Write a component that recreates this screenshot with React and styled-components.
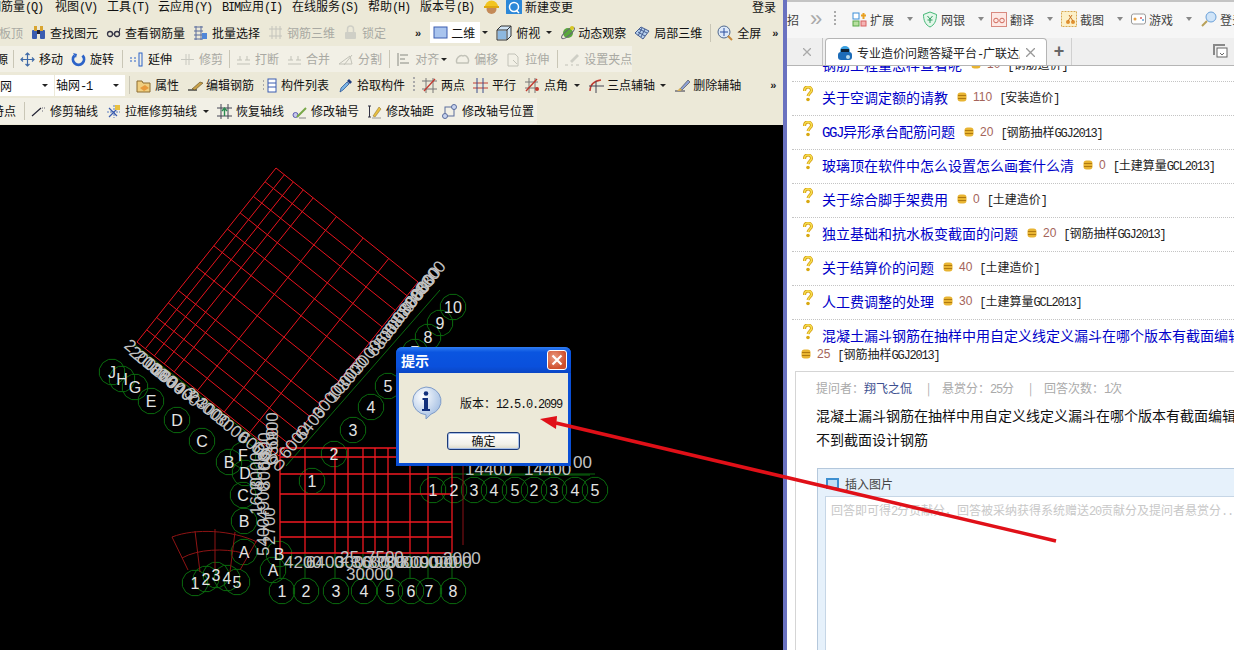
import React from 'react';
import styled, { createGlobalStyle } from 'styled-components';

const Global = createGlobalStyle`
  html, body { margin: 0; padding: 0; background: #000; }
  body { font-family: "Noto Sans CJK SC", "Liberation Sans", sans-serif; font-size: 12px; }
`;

const Page = styled.div`
  position: relative;
  display: flex;
  width: 1234px;
  height: 650px;
  overflow: hidden;
`;

// half-width latin, the way the old bitmap font in the shot draws it
const Latin = styled.span`
  font-family: "Liberation Mono", monospace;
  letter-spacing: -.1em;
`;

const Mixed = ({ children }) => children.split(/([\x00-\x7f]+)/).map((part, i) => (
  i % 2 ? <Latin key={i}>{part}</Latin> : part
));

// ---- left: CAD application ----
const Cad = styled.div`
  display: flex;
  flex-direction: column;
  width: 783px;
  flex: none;
`;

const Bars = styled.div`
  display: flex;
  flex-direction: column;
  height: 125px;
  flex: none;
  background: #ece9d8;
  color: #111;
`;

const MenuRow = styled.div`
  display: flex;
  align-items: center;
  height: 14px;
  white-space: nowrap;
  overflow: hidden;
`;

const MenuItem = styled.span`
  flex: none;
  width: ${p => p.$w}px;
  margin-left: ${p => p.$ml || 0}px;
  line-height: 14px;
  font-size: 12px;
`;

const Row = styled.div`
  display: flex;
  align-items: center;
  height: ${p => p.$h || 26}px;
  margin-top: ${p => p.$mt || 0}px;
  white-space: nowrap;
  overflow: hidden;
`;

const Strip = styled.div`
  display: flex;
  align-items: center;
  gap: 8px;
  flex: none;
  height: 100%;
  width: ${p => p.$w}px;
  box-sizing: border-box;
  background: ${p => p.$plain ? 'transparent' : '#f2f0e6'};
  overflow: hidden;
`;

const Tool = styled.span`
  display: inline-flex;
  align-items: center;
  gap: ${p => p.$gap ?? 4}px;
  flex: none;
  margin-left: ${p => p.$ml || 0}px;
  line-height: 16px;
  color: ${p => p.$off ? '#a9a9a3' : '#111'};
`;

const Caret = styled.i`
  flex: none;
  width: 0;
  height: 0;
  margin-left: ${p => p.$ml || 0}px;
  border: 3px solid transparent;
  border-top: 3px solid #222;
  border-bottom: 0;
`;

const Sep = styled.i`
  flex: none;
  width: 1px;
  height: 18px;
  margin-left: ${p => p.$ml || 0}px;
  margin-right: -2px;
  background: #c9c6b6;
`;

const Chevrons = styled.b`
  flex: none;
  margin-left: ${p => p.$ml || 0}px;
  font: bold 11px "Liberation Sans", sans-serif;
  letter-spacing: -1px;
  color: #222;
`;

const Combo = styled.span`
  display: flex;
  align-items: center;
  justify-content: ${p => p.$start ? 'flex-start' : 'space-between'};
  gap: ${p => p.$start ? 3 : 0}px;
  flex: none;
  width: ${p => p.$w}px;
  height: 21px;
  margin-left: ${p => p.$ml || 0}px;
  box-sizing: border-box;
  padding: 0 6px 0 ${p => p.$pl || 0}px;
  background: #fff;
  font-size: 12px;
`;

const Grip = styled.i`
  flex: none;
  width: 2px;
  height: 16px;
  margin-right: ${p => p.$mr ?? -2}px;
  background: repeating-linear-gradient(#aaa 0 2px, transparent 2px 4px);
`;

const Canvas = styled.div`
  position: relative;
  flex: 1;
  background: #000;
  overflow: hidden;
  svg { display: block; }
`;

// ---- message box on the canvas ----
const Dialog = styled.div`
  position: absolute;
  left: 396px;
  top: 222px;
  width: 175px;
  height: 119px;
  box-sizing: border-box;
  display: flex;
  flex-direction: column;
  padding: 0 3px 3px;
  background: #0a4fd6;
  border-radius: 6px 6px 0 0;
`;

const DialogTitle = styled.div`
  display: flex;
  align-items: center;
  justify-content: space-between;
  height: 26px;
  flex: none;
  margin: 0 -3px;
  padding: 0 4px 0 5px;
  border-radius: 6px 6px 0 0;
  background: linear-gradient(#2f7df2, #0a55e0 20%, #0a50dc 75%, #0a46c4);
  color: #fff;
  font-size: 14px;
  font-weight: 700;
`;

const CloseBtn = styled.span`
  display: flex;
  align-items: center;
  justify-content: center;
  width: 20px;
  height: 20px;
  box-sizing: border-box;
  border: 1px solid #fff;
  border-radius: 3px;
  background: radial-gradient(circle at 35% 35%, #ea9a80, #cf4f2c 70%);
`;

const DialogBody = styled.div`
  flex: 1;
  display: flex;
  flex-direction: column;
  background: #ece9d8;
`;

const DialogMsg = styled.div`
  display: flex;
  align-items: center;
  gap: 18px;
  padding: 13px 0 0 11px;
  font-size: 12px;
  color: #111;
  white-space: nowrap;
`;

const OkBtn = styled.span`
  align-self: flex-start;
  margin: 12px 0 0 48px;
  width: 73px;
  height: 18px;
  box-sizing: border-box;
  border: 1px solid #1c3a78;
  border-radius: 3px;
  box-shadow: inset 0 0 0 1px #a9c0e8;
  background: linear-gradient(#fff, #f2f1ea 70%, #dcd9c8);
  text-align: center;
  line-height: 15px;
  font-size: 12px;
  color: #111;
`;

// ---- right: browser ----
const Divider = styled.div`
  flex: none;
  width: 4px;
  background: #6a72c0;
`;

const Browser = styled.div`
  flex: 1;
  min-width: 0;
  display: flex;
  flex-direction: column;
  background: #fff;
`;

const BrowserBar = styled.div`
  display: flex;
  align-items: center;
  height: 38px;
  flex: none;
  box-sizing: border-box;
  border-top: 2px solid #c4c4c4;
  padding-bottom: 2px;
  background: #f6f6f6;
  color: #333;
  font-size: 12px;
  white-space: nowrap;
  overflow: hidden;
`;

const BarText = styled.span`
  flex: none;
  margin-right: 11px;
  color: #444;
`;

const BarChevron = styled.span`
  flex: none;
  width: 12px;
  margin-right: 12px;
  color: #aaa;
  font: 22px/20px "Liberation Sans", sans-serif;
`;

const BarBtn = styled.span`
  display: inline-flex;
  align-items: center;
  flex: none;
  gap: 3px;
  width: ${p => p.$w || 70}px;
  color: #444;
`;

const BarCaret = styled.i`
  width: 0;
  height: 0;
  margin-left: 10px;
  border: 3px solid transparent;
  border-top: 4px solid #888;
  border-bottom: 0;
`;

const TabRow = styled.div`
  display: flex;
  align-items: flex-end;
  height: 28px;
  flex: none;
  box-sizing: border-box;
  background: #efefef;
  border-bottom: 1px solid #b5b5b5;
  overflow: hidden;
`;

const OldTab = styled.div`
  width: 36px;
  height: 27px;
  flex: none;
  display: flex;
  align-items: center;
  justify-content: flex-end;
  padding-right: 11px;
  box-sizing: border-box;
  border-right: 1px solid #c4c4c4;
  color: #999;
`;

const ActiveTab = styled.div`
  display: flex;
  align-items: center;
  width: 222px;
  height: 28px;
  flex: none;
  margin: 0 0 -1px 2px;
  padding-left: 11px;
  box-sizing: border-box;
  background: #fff;
  border: 1px solid #b5b5b5;
  border-bottom: 0;
  border-radius: 4px 4px 0 0;
  color: #222;
  font-size: 12px;
`;

const TabTitle = styled.span`
  width: 163px;
  margin: 0 6px 0 4px;
  overflow: hidden;
  white-space: nowrap;
  flex: none;
`;

const Plus = styled.span`
  width: 24px;
  height: 27px;
  flex: none;
  text-align: center;
  font: bold 18px/26px "Liberation Sans", sans-serif;
  color: #666;
  border-right: 1px solid #d0d0d0;
`;

const Restore = styled.span`
  margin: 0 6px 6px auto;
  display: flex;
`;

const Content = styled.div`
  position: relative;
  flex: 1;
  overflow: hidden;
  background: #fff;
`;

const Clipped = styled.div`
  height: 14px;
  margin: -9px 0 10px;
  padding-left: 35px;
  display: flex;
  align-items: center;
  color: #0000c8;
  font-size: 14px;
  white-space: nowrap;
`;

const List = styled.ul`
  list-style: none;
  margin: 0;
  padding: 0 0 0 5px;
`;

const Item = styled.li`
  display: flex;
  flex-wrap: wrap;
  align-items: center;
  height: ${p => p.$tall ? '52px' : '34px'};
  align-content: flex-start;
  padding-top: 5px;
  box-sizing: border-box;
  border-top: 1px dotted #c4c4c4;
  white-space: nowrap;
  width: 500px;
`;

const Ask = styled.span`
  width: 30px;
  flex: none;
  padding-left: 11px;
  box-sizing: border-box;
  height: 20px;
  margin-top: -3px;
`;

const Question = styled.a`
  flex: none;
  color: #0000c8;
  font-size: 14px;
  line-height: 20px;
`;

const Points = styled.span`
  display: inline-flex;
  align-items: center;
  gap: 6px;
  flex: none;
  margin-left: 9px;
  color: #a4645a;
  font: 12px "Liberation Sans", sans-serif;
`;

const Category = styled.span`
  flex: none;
  margin-left: 7px;
  font-size: 12px;
  color: #222;
`;

const Line2 = styled.div`
  width: 100%;
  display: flex;
  align-items: center;
  height: 15px;
  margin-top: 1px;
`;

const Detail = styled.section`
  margin-left: 8px;
  width: 500px;
  height: 300px;
  border: 1px solid #d5d5d5;
  border-right: 0;
  padding: 8px 0 0 20px;
  white-space: nowrap;
`;

const Meta = styled.div`
  display: flex;
  gap: 15px;
  font-size: 12px;
  line-height: 16px;
  color: #aaa;
  b { font-weight: 400; color: #3d4f8f; }
`;

const Pipe = styled.span`
  width: 0;
`;

const Body = styled.p`
  margin: 5px 0 0;
  font-size: 14px;
  line-height: 24px;
  color: #111;
`;

const AnswerBox = styled.div`
  margin: 17px 0 0 1px;
  height: 200px;
  box-sizing: border-box;
  border: 1px solid #b5c8dc;
  border-right: 0;
  background: #e6f1fb;
  padding: 0 0 0 7px;
`;

const AnswerHead = styled.div`
  display: flex;
  align-items: center;
  gap: 6px;
  height: 27px;
  padding: 2px 0 0 1px;
  box-sizing: border-box;
  font-size: 12px;
  color: #444;
`;

const AnswerInput = styled.div`
  height: 170px;
  background: #fff;
  border: 1px solid #c6d6e6;
  border-right: 0;
  padding: 4px 0 0 5px;
  font-size: 12px;
  color: #c8c8c8;
  overflow: hidden;
`;

const Overlay = styled.svg`
  position: absolute;
  left: 0;
  top: 0;
  pointer-events: none;
`;

// ---- small toolbar drawings ----
const Ico = ({ children, w = 15, h = 15 }) => (
  <svg width={w} height={h} viewBox={`0 0 ${w} ${h}`} style={{ flex: 'none', display: 'block' }}>{children}</svg>
);

const Binoculars = () => <Ico><rect x="1" y="5" width="5" height="9" rx="1" fill="#3a5cb0"/><rect x="9" y="5" width="5" height="9" rx="1" fill="#3a5cb0"/><rect x="3" y="1" width="3" height="5" fill="#d9a531"/><rect x="9" y="1" width="3" height="5" fill="#d9a531"/><rect x="6" y="5" width="3" height="4" fill="#223"/></Ico>;
const Glasses = () => <Ico><circle cx="4" cy="9" r="2.5" fill="none" stroke="#334" strokeWidth="1.3"/><circle cx="11" cy="9" r="2.5" fill="none" stroke="#334" strokeWidth="1.3"/><path d="M6 9h2.5M13 8l1-5" stroke="#334"/></Ico>;
const Batch = () => <Ico><path d="M1 2h9M1 6h9M1 10h9M1 14h9M3 1v14M8 1v14" stroke="#5a6c9c" fill="none"/><rect x="9" y="8" width="5" height="6" fill="#4f86d8"/></Ico>;
const Rebar3d = () => <Ico><path d="M1 4h13M1 11h13M4 1v13M8 1v13M12 1v13" stroke="#c4c4bc" fill="none"/></Ico>;
const Lock = () => <Ico><rect x="2" y="7" width="11" height="7" rx="1" fill="#cfcfc6"/><path d="M4.5 7V4a3 3 0 0 1 6 0v3" stroke="#cfcfc6" strokeWidth="1.5" fill="none"/></Ico>;
const Plane = () => <Ico><rect x="1" y="2" width="13" height="11" fill="#a9c4ee" stroke="#3a5cb0"/></Ico>;
const Cube = () => <Ico w={16} h={16}><path d="M1 5l4-4h10v10l-4 4H1z" fill="#cfe3f4" stroke="#333"/><path d="M1 5h10v10M11 5l4-4" fill="none" stroke="#333"/><rect x="2" y="6" width="8" height="8" fill="#8db8e0"/></Ico>;
const Orbit = () => <Ico w={16} h={16}><circle cx="8" cy="8" r="5" fill="#5aa83c"/><ellipse cx="8" cy="8" rx="8" ry="2.5" transform="rotate(-40 8 8)" fill="none" stroke="#667" /><circle cx="12" cy="3" r="2" fill="#d8c820"/></Ico>;
const Local3d = () => <Ico w={16} h={16}><path d="M1 8l6-6 8 4-6 8z" fill="#b8d2ee" stroke="#445c90"/><path d="M5 4l8 4M4 7l7 4M8 3l-4 8M11 4l-4 8" stroke="#445c90" fill="none"/></Ico>;
const Zoom = () => <Ico w={16} h={16}><circle cx="7" cy="7" r="6" fill="#dce8f8" stroke="#50688c"/><path d="M7 3v8M3 7h8" stroke="#2a4ea0"/><path d="M11 11l4 4" stroke="#c88a3c" strokeWidth="2"/></Ico>;
const Move = () => <Ico><path d="M7.5 1v13M1 7.5h13M5.5 3l2-2 2 2M5.5 12l2 2 2-2M3 5.5l-2 2 2 2M12 5.5l2 2-2 2" stroke="#3f6aa8" fill="none" strokeWidth="1.2"/></Ico>;
const Rotate = () => <Ico><path d="M3.5 3.5a5.5 5.5 0 1 0 8 0" stroke="#2c63c8" strokeWidth="2.8" fill="none"/><path d="M2 1l4 1-1 4z" fill="#2c63c8"/></Ico>;
const Extend = () => <Ico><path d="M1 6h2M1 9h2M5 6h2M5 9h2" stroke="#2c63c8"/><rect x="10" y="1" width="3" height="13" fill="none" stroke="#2c63c8"/></Ico>;
const Trim = () => <Ico><path d="M1 7.5h13M6 2v11M9 2v11" stroke="#c8c8c0" fill="none"/></Ico>;
const Breaks = () => <Ico><path d="M1 12h13M1 8h5M9 8h5M4 4v4M11 4v4" stroke="#c2c2b8" fill="none"/></Ico>;
const Split = () => <Ico w={16} h={15}><path d="M1 12h13L12 4 1 12M6 13l8-10" stroke="#c2c2b8" fill="none"/></Ico>;
const Align = () => <Ico><path d="M2 1v13M4 3h8M4 7h5M4 11h9" stroke="#bdbdb4" strokeWidth="2" fill="none"/></Ico>;
const Offset = () => <Ico><path d="M2 11c-2-4 3-9 6-7 3-2 7 3 5 7z" fill="none" stroke="#c2c2b8" strokeWidth="1.5"/></Ico>;
const Stretch = () => <Ico><path d="M2 2h7l3 3v9H2z" fill="none" stroke="#c2c2b8"/><path d="M7 8l4 4" stroke="#c2c2b8"/></Ico>;
const Grab = () => <Ico w={16} h={15}><path d="M1 13h3M7 13h2M12 13h3" stroke="#c2c2b8"/><path d="M6 9l7-7 2 2-7 7z" fill="#cfcfc6"/></Ico>;
const Attr = () => <Ico><path d="M1 3h5l1 2h7v9H1z" fill="#f0cf80" stroke="#8c6c30"/><path d="M4 10l5-3 4 3-5 3z" fill="#e89a3c"/></Ico>;
const EditRebar = () => <Ico w={17} h={15}><path d="M1 12h9" stroke="#222" strokeWidth="1.2"/><path d="M5 11l8-7 3 1-8 7z" fill="#c8a048" stroke="#5a4a20" strokeWidth=".6"/></Ico>;
const ListIco = () => <Ico><path d="M1 3h2M1 7h2M1 11h2" stroke="#667" strokeDasharray="1 1"/><rect x="6" y="1" width="8" height="13" fill="#fff" stroke="#3a5cb0"/><path d="M6 5h8M6 9h8" stroke="#3a5cb0"/></Ico>;
const Pick = () => <Ico><path d="M2 14l1-4 6-6 2 2-6 6z" fill="#7ab4e4" stroke="#204a90" strokeWidth=".7"/><path d="M9 3l2-2 3 3-2 2z" fill="#1c3c80"/></Ico>;
const TwoPts = () => <Ico w={16} h={16}><path d="M1 4h15M1 12h15M5 1v15M12 1v15" stroke="#777" fill="none"/><path d="M3 14l11-12" stroke="#c23a30" strokeWidth="1.3"/></Ico>;
const Parallel = () => <Ico><path d="M0 5h15M0 10h15" stroke="#c23a30"/><path d="M4 0v15M10 0v15" stroke="#3a4c8c"/></Ico>;
const Angle = () => <Ico w={16} h={16}><path d="M1 5h13M1 11h13M5 1v15M11 1v15" stroke="#777"/><path d="M2 14L13 2" stroke="#c23a30" strokeWidth="1.4"/><circle cx="13" cy="12" r="2" fill="#c23a30"/></Ico>;
const Arc3 = () => <Ico w={16} h={16}><path d="M2 14c0-6 4-10 11-11" stroke="#c23a30" strokeWidth="1.4" fill="none"/><path d="M1 9h15M8 4v12" stroke="#445"/></Ico>;
const Erase = () => <Ico w={17} h={16}><path d="M1 14h10" stroke="#334"/><path d="M6 12l8-9 2 2-8 8z" fill="#8ca0d4" stroke="#444" strokeWidth=".6"/><path d="M3 14l3-3 2 2-2 1z" fill="#d8b058"/></Ico>;
const CutAxis = () => <Ico><path d="M1 12l9-8" stroke="#223" strokeWidth="1.2"/><path d="M11 4h3M11 7h2" stroke="#667" strokeDasharray="1 1"/></Ico>;
const BoxCut = () => <Ico><path d="M1 8h13M8 1v13" stroke="#5a7cc0" strokeDasharray="2 1"/><path d="M3 13l9-9M3 4l8 8" stroke="#3a5cb0" strokeWidth="1.2"/><rect x="9" y="1" width="5" height="5" fill="#e8c040"/></Ico>;
const Restores = () => <Ico><path d="M0 4h15M0 12h15M4 0v15M11 0v15" stroke="#445"/><path d="M7.5 4v8M5 7l2.5-3 2.5 3" stroke="#2a8a50" strokeWidth="1.4" fill="none"/></Ico>;
const EditNo = () => <Ico><circle cx="3.5" cy="11" r="2.5" fill="#c8c8ec" stroke="#5a5ab0"/><path d="M5 13l9-9" stroke="#78a848" strokeWidth="2"/><path d="M7 14h7" stroke="#888"/></Ico>;
const EditDist = () => <Ico><path d="M1 2h3M2.500 2v11M1 13h3" stroke="#334"/><path d="M6 12l6-9 2 2-6 8z" fill="#e8c040" stroke="#886820" strokeWidth=".5"/><path d="M5 14h9" stroke="#999"/></Ico>;
const EditPos = () => <Ico><rect x="3" y="3" width="9" height="9" fill="none" stroke="#5a6c9c"/><circle cx="3" cy="12" r="2.500" fill="#c8d4f0" stroke="#5a6c9c"/><circle cx="12" cy="3" r="2.500" fill="#c8d4f0" stroke="#5a6c9c"/></Ico>;
const Helmet = () => <svg width="17" height="16" viewBox="0 0 17 16" style={{ display: 'block', flex: 'none' }}><circle cx="8.500" cy="10" r="5" fill="#c48a58"/><path d="M2 8a6.500 6.500 0 0 1 13 0z" fill="#f2c520"/><rect x="1" y="7" width="15" height="2" fill="#e0a810"/></svg>;
const BlueBadge = () => <svg width="16" height="16" viewBox="0 0 16 16" style={{ display: 'block', flex: 'none' }}><rect width="16" height="16" rx="2" fill="#2c88d8"/><circle cx="8" cy="8" r="4.500" fill="none" stroke="#fff" strokeWidth="1.500"/><path d="M10 11l3 3" stroke="#fff" strokeWidth="1.500"/></svg>;

const ExtIco = () => <Ico><rect x="1" y="1" width="6" height="6" fill="#fff" stroke="#3a8ed8"/><rect x="1" y="9" width="6" height="5" fill="#b8e0a0" stroke="#58a848"/><rect x="9" y="9" width="5" height="5" fill="#f4b4b4" stroke="#d86060"/><path d="M11.500 1v6M9 3.500h5" stroke="#e8a020" strokeWidth="2"/></Ico>;
const BankIco = () => <Ico w={16} h={17}><path d="M8 1l6.500 2.500c0 6-2 10.500-6.500 12.500C3.500 14 1.500 9.500 1.500 3.500z" fill="#e4f7ea" stroke="#46b878"/><path d="M5.500 5L8 8l2.500-3M5.500 9h5M8 8v4" stroke="#2f9a5e" fill="none"/></Ico>;
const TransIco = () => <svg width="16" height="15" viewBox="0 0 16 15" style={{ display: 'block', flex: 'none' }}><rect x=".5" y=".5" width="15" height="14" fill="#fde8e4" stroke="#d88a80"/><circle cx="5" cy="8.500" r="2.300" fill="none" stroke="#d0695c"/><circle cx="11" cy="8.500" r="2.300" fill="none" stroke="#d0695c"/></svg>;
const ShotIco = () => <Ico w={16} h={16}><rect x=".5" y=".5" width="15" height="15" fill="#fcf0c8" stroke="#d8a850" strokeDasharray="2 1"/><circle cx="7" cy="11" r="2" fill="#e09030"/><circle cx="12" cy="11" r="2" fill="#e09030"/><path d="M7 10l4-6M12 10L8 4" stroke="#c87020"/></Ico>;
const GameIco = () => <Ico><rect x=".5" y="2" width="14" height="10" rx="2" fill="#fff" stroke="#999"/><circle cx="4" cy="7" r="1.500" fill="#e8a040"/><circle cx="10" cy="6" r="1" fill="#d86060"/><circle cx="12" cy="8" r="1" fill="#60a0d8"/></Ico>;
const LoginIco = () => <Ico w={16} h={16}><circle cx="10" cy="6" r="5" fill="#cfe4f8" stroke="#6aa0d8"/><path d="M6 10l-5 5" stroke="#b8a058" strokeWidth="2"/></Ico>;
const TabIco = () => <Ico w={16} h={16}><circle cx="8" cy="6" r="5" fill="#3aa0e0"/><rect x="1" y="7" width="14" height="8" rx="3" fill="#1c6cb8"/><rect x="4" y="4" width="8" height="3" fill="#123"/><circle cx="11" cy="12" r="2" fill="#bde"/></Ico>;
const RestoreIco = () => <svg width="16" height="16" viewBox="0 0 16 16" style={{ display: 'block' }}><path d="M2 12V2h11" fill="none" stroke="#888" strokeWidth="2"/><rect x="5" y="5" width="10" height="9" fill="#fff" stroke="#666"/><path d="M8 10l2 2 2-2" fill="none" stroke="#666"/></svg>;

const QMark = () => (
  <svg width="10" height="16" viewBox="0 0 10 16" style={{ display: 'block' }}>
    <path d="M1.500 5C1.500 2.500 3 1 5 1s3.500 1.500 3.500 3.500S5.500 7.500 5 10" fill="none" stroke="#d49a10" strokeWidth="3"/>
    <path d="M1.500 5C1.500 2.500 3 1 5 1s3.500 1.500 3.500 3.500S5.500 7.500 5 10" fill="none" stroke="#f6e050" strokeWidth="1.400"/>
    <circle cx="5" cy="13.500" r="1.800" fill="#d8a810"/>
  </svg>
);

const Coins = () => (
  <svg width="10" height="10" viewBox="0 0 10 10" style={{ display: 'block', flex: 'none' }}>
    <rect x=".5" y=".5" width="9" height="9" rx="3" fill="#e8b432"/>
    <path d="M1 3.500h8M1 6.500h8" stroke="#b07a10"/>
  </svg>
);

const InfoIcon = () => (
  <svg width="32" height="34" viewBox="0 0 32 34" style={{ flex: 'none', display: 'block' }}>
    <defs>
      <radialGradient id="ballGrad" cx=".35" cy=".3" r=".8">
        <stop offset="0" stopColor="#fff" />
        <stop offset="1" stopColor="#9ab8e0" />
      </radialGradient>
    </defs>
    <path d="M16 1a15 14 0 0 1 5 27.200L16 33v-4.200A15 14 0 0 1 16 1z" fill="url(#ballGrad)" stroke="#7f9cc8" />
    <circle cx="16" cy="7.500" r="2.300" fill="#12307c" />
    <path d="M12.500 12h5.500v11h2v2h-8v-2h2v-9h-1.500z" fill="#12307c" />
  </svg>
);

// ---- CAD drawing data ----
const lerp = (a, b, t) => [a[0] + (b[0] - a[0]) * t, a[1] + (b[1] - a[1]) * t];
const T = [276, 168], R = [418, 282], L = [137, 342], B = [279, 456];
const uFrac = [0, .059, .122, .192, .262, .426, .614, .794, 1];
const vFrac = [0, .079, .163, .258, .35, .447, .57, .703, .775, .859, .93, 1];

const gridX = [280, 305, 335, 348, 363, 375, 388, 410, 428, 452];
const gridY = [448, 457, 474, 494, 522, 537, 553];

const bubbles = [
  ['J', 112, 372], ['H', 122, 379], ['G', 135, 387], ['E', 151, 401], ['D', 177, 420], ['C', 202, 441], ['B', 229, 462],
  ['10', 453, 307], ['9', 440, 323], ['8', 428, 337], ['7', 415, 352], ['5', 388, 386], ['4', 371, 407], ['3', 353, 430], ['2', 334, 454], ['1', 312, 481],
  ['F', 243, 455], ['D', 245, 473], ['C', 243, 495], ['B', 244, 521], ['A', 244, 552], ['B', 279, 554], ['A', 273, 570],
  ['1', 282, 591], ['2', 306, 591], ['3', 336, 591], ['4', 364, 591], ['5', 390, 591], ['6', 411, 591], ['7', 429, 591], ['8', 453, 591],
  ['1', 433, 490], ['2', 454, 490], ['3', 474, 490], ['4', 494, 490], ['5', 515, 490], ['2', 534, 490], ['3', 554, 490], ['4', 575, 490], ['5', 595, 490],
  ['1', 195, 583], ['2', 206, 579], ['3', 216, 575], ['4', 227, 578], ['5', 237, 582],
];

const octagon = (cx, cy, r = 13) => Array.from({ length: 12 }, (_, i) => {
  const a = (i * Math.PI) / 6 + .26;
  return `${(cx + r * Math.cos(a)).toFixed(1)},${(cy + r * Math.sin(a)).toFixed(1)}`;
}).join(' ');

// overlapping dimension strings: [text, x, y, angle]
const dims = [
  ['2', 123, 347, 39], ['2000', 128, 354, 39], ['2000', 133, 358, 39], ['1800', 142, 365, 39], ['1800', 150, 372, 39], ['6000', 158, 378, 39], ['6400', 165, 384, 39],
  ['3', 183, 395, 39], ['2400', 186, 398, 39], ['3000', 195, 405, 39], ['3000', 214, 421, 39], ['6000', 237, 439, 39], ['6600', 250, 449, 39],
  ['6000', 287, 460, -51], ['6400', 303, 442, -51], ['3000', 320, 420, -51], ['1000', 335, 403, -51], ['8000', 345, 392, -51], ['3000', 359, 375, -51],
  ['6800', 375, 358, -51], ['6800', 383, 347, -51], ['8800', 392, 336, -51], ['8800', 400, 325, -51], ['8800', 407, 316, -51], ['8800', 413, 309, -51], ['8800', 418, 302, -51], ['8300', 423, 296, -51],
  ['2700', 275, 545, -90], ['5400', 269, 556, -90], ['4900', 269, 520, -90], ['1600', 262, 515, -90], ['3000', 262, 490, -90], ['8000', 270, 490, -90], ['6300', 270, 470, -90], ['6300', 278, 465, -90], ['6900', 278, 450, -90],
  ['4200', 284, 568, 0], ['6400', 306, 568, 0], ['3000', 335, 568, 0], ['3600', 352, 568, 0], ['3000', 368, 568, 0], ['3000', 385, 568, 0], ['8000', 400, 568, 0], ['9000', 420, 568, 0], ['9000', 434, 568, 0],
  ['25', 340, 563, 0], ['7500', 366, 563, 0], ['2000', 443, 564, 0], ['30000', 346, 580, 0],
  ['14400', 465, 475, 0], ['14400', 524, 475, 0], ['00', 573, 468, 0],
];

const CadDrawing = () => (
  <svg width="783" height="525" viewBox="0 125 783 525">
    <g stroke="#0a6a0e" fill="none" strokeWidth="1">
      {bubbles.map(([t, x, y], i) => <polygon key={i} points={octagon(x, y)} />)}
      <path d="M280 553V578M305 553V578M335 553V578M363 553V578M388 553V578M410 553V578M428 553V578M452 553V578" />
      <path d="M452 474H595M285 565H470M470 475H590" />
      <path d="M286 466L440 290M263 445L135 345" />
    </g>
    <g stroke="#e8141e" strokeWidth="1" fill="none">
      {uFrac.map((t, i) => {
        const a = lerp(T, R, t), b = lerp(L, B, t);
        return <line key={`u${i}`} x1={a[0]} y1={a[1]} x2={b[0]} y2={b[1]} />;
      })}
      {vFrac.map((t, i) => {
        const a = lerp(T, L, t), b = lerp(R, B, t);
        return <line key={`v${i}`} x1={a[0]} y1={a[1]} x2={b[0]} y2={b[1]} />;
      })}
    </g>
    <g stroke="#f01820" strokeWidth="1.300" fill="none">
      {gridX.map(x => <line key={`x${x}`} x1={x} y1={448} x2={x} y2={553} />)}
      {gridY.map(y => <line key={`y${y}`} x1={280} y1={y} x2={452} y2={y} />)}
      <path d="M463 457V545" stroke="#8a1016" strokeWidth="1" />
    </g>
    <g stroke="#8e1414" fill="none">
      <path d="M172 537C195 528 232 530 257 542M182 558C198 549 224 548 243 553" />
      <path d="M172 537L188 570M195 531L200 572M215 529V570M235 532L230 572M257 540L240 570" />
    </g>
    <g fill="#c2c2c2" fontFamily='"Liberation Sans", sans-serif' fontSize="17">
      {dims.map(([t, x, y, a], i) => (
        <text key={i} x={x} y={y} transform={`rotate(${a} ${x} ${y})`}>{t}</text>
      ))}
    </g>
    <g fill="#e4e4e4" fontFamily='"Liberation Sans", sans-serif' fontSize="16" textAnchor="middle">
      {bubbles.map(([t, x, y], i) => <text key={i} x={x} y={y + 6}>{t}</text>)}
    </g>
  </svg>
);

const questions = [
  ['关于空调定额的请教', '110', '[安装造价]'],
  ['GGJ异形承台配筋问题', '20', '[钢筋抽样GGJ2013]'],
  ['玻璃顶在软件中怎么设置怎么画套什么清', '0', '[土建算量GCL2013]'],
  ['关于综合脚手架费用', '0', '[土建造价]'],
  ['独立基础和抗水板变截面的问题', '20', '[钢筋抽样GGJ2013]'],
  ['关于结算价的问题', '40', '[土建造价]'],
  ['人工费调整的处理', '30', '[土建算量GCL2013]'],
];

export default function App() {
  return (
    <Page>
      <Global />
      <Cad>
        <Bars>
          <MenuRow>
            <MenuItem $w={66} $ml={-11}><Mixed>钢筋量(Q)</Mixed></MenuItem>
            <MenuItem $w={52}><Mixed>视图(V)</Mixed></MenuItem>
            <MenuItem $w={51}><Mixed>工具(T)</Mixed></MenuItem>
            <MenuItem $w={64}><Mixed>云应用(Y)</Mixed></MenuItem>
            <MenuItem $w={70}><Mixed>BIM应用(I)</Mixed></MenuItem>
            <MenuItem $w={76}><Mixed>在线服务(S)</Mixed></MenuItem>
            <MenuItem $w={52}><Mixed>帮助(H)</Mixed></MenuItem>
            <MenuItem $w={63}><Mixed>版本号(B)</Mixed></MenuItem>
            <Helmet />
            <MenuItem $w={6} />
            <BlueBadge />
            <MenuItem $w={3} />
            <MenuItem $w={227}>新建变更</MenuItem>
            <MenuItem $w={30}>登录</MenuItem>
          </MenuRow>
          <Row $h={25} $mt={6}>
            <Strip $w={783} $plain>
              <Tool $off $ml={-1}>板顶</Tool>
              <Tool><Binoculars />查找图元</Tool>
              <Tool><Glasses />查看钢筋量</Tool>
              <Tool><Batch />批量选择</Tool>
              <Tool $off><Rebar3d />钢筋三维</Tool>
              <Tool $off><Lock />锁定</Tool>
              <Chevrons $ml={21}>»</Chevrons>
              <Combo $w={50} $pl={3} $ml={2} $start><Plane />二维</Combo>
              <Caret $ml={-6} />
              <Tool><Cube />俯视</Tool>
              <Caret $ml={-2} />
              <Tool $gap={2}><Orbit />动态观察</Tool>
              <Tool><Local3d />局部三维</Tool>
              <Sep />
              <Tool><Zoom />全屏</Tool>
              <Chevrons $ml={3}>»</Chevrons>
            </Strip>
          </Row>
          <Row $h={26} $mt={1}>
            <Strip $w={632}>
              <Tool $ml={-4}>源</Tool>
              <Sep $ml={-3} />
              <Tool><Move />移动</Tool>
              <Tool><Rotate />旋转</Tool>
              <Sep />
              <Tool><Extend />延伸</Tool>
              <Tool $off><Trim />修剪</Tool>
              <Sep $ml={-2} />
              <Tool $off><Breaks />打断</Tool>
              <Tool $off><Breaks />合并</Tool>
              <Tool $off><Split />分割</Tool>
              <Sep $ml={-1} />
              <Tool $off><Align />对齐</Tool>
              <Caret $ml={-6} />
              <Tool $off><Offset />偏移</Tool>
              <Tool $off><Stretch />拉伸</Tool>
              <Sep />
              <Tool $off><Grab />设置夹点</Tool>
            </Strip>
          </Row>
          <Row $h={26}>
            <Strip $w={783} $plain>
              <Combo $w={54}>网<Caret /></Combo>
              <Combo $w={70} $ml={-7} $pl={1}><span><Mixed>轴网-1</Mixed></span><Caret /></Combo>
              <Sep $ml={-4} />
              <Tool><Attr />属性</Tool>
              <Tool $gap={2}><EditRebar />编辑钢筋</Tool>
              <Tool><ListIco />构件列表</Tool>
              <Tool $ml={1}><Pick />拾取构件</Tool>
              <Grip />
              <Tool><TwoPts />两点</Tool>
              <Tool><Parallel />平行</Tool>
              <Tool><Angle />点角</Tool>
              <Caret $ml={-2} />
              <Tool $gap={3}><Arc3 />三点辅轴</Tool>
              <Caret $ml={-3} />
              <Tool $gap={2}><Erase />删除辅轴</Tool>
              <Chevrons $ml={21}>»</Chevrons>
            </Strip>
          </Row>
          <Row $h={26}>
            <Strip $w={537}>
              <Tool $ml={-8}>特点</Tool>
              <Sep />
              <Tool><CutAxis />修剪轴线</Tool>
              <Tool><BoxCut />拉框修剪轴线</Tool>
              <Caret $ml={-2} />
              <Tool><Restores />恢复轴线</Tool>
              <Tool><EditNo />修改轴号</Tool>
              <Tool><EditDist />修改轴距</Tool>
              <Tool $gap={5}><EditPos />修改轴号位置</Tool>
            </Strip>
          </Row>
        </Bars>
        <Canvas>
          <CadDrawing />
          <Dialog>
            <DialogTitle>
              提示
              <CloseBtn>
                <svg width="12" height="12" viewBox="0 0 12 12"><path d="M1.500 1.500l9 9M10.500 1.500l-9 9" stroke="#fff" strokeWidth="2.200" /></svg>
              </CloseBtn>
            </DialogTitle>
            <DialogBody>
              <DialogMsg>
                <InfoIcon />
                <span><Mixed>版本：12.5.0.2099</Mixed></span>
              </DialogMsg>
              <OkBtn>确定</OkBtn>
            </DialogBody>
          </Dialog>
        </Canvas>
      </Cad>
      <Divider />
      <Browser>
        <BrowserBar>
          <BarText>招</BarText>
          <BarChevron>»</BarChevron>
          <Grip $mr={16} />
          <BarBtn><ExtIco />扩展<BarCaret /></BarBtn>
          <BarBtn $w={69}><BankIco />网银<BarCaret /></BarBtn>
          <BarBtn><TransIco />翻译<BarCaret /></BarBtn>
          <BarBtn><ShotIco />截图<BarCaret /></BarBtn>
          <BarBtn><GameIco />游戏<BarCaret /></BarBtn>
          <BarBtn><LoginIco />登录</BarBtn>
        </BrowserBar>
        <TabRow>
          <OldTab>
            <svg width="8" height="8" viewBox="0 0 8 8"><path d="M0 0l8 8M8 0L0 8" stroke="#aaa" strokeWidth="1.300" /></svg>
          </OldTab>
          <ActiveTab>
            <TabIco />
            <TabTitle><Mixed>专业造价问题答疑平台-广联达服务新干线</Mixed></TabTitle>
            <svg width="9" height="9" viewBox="0 0 9 9"><path d="M0 0l9 9M9 0L0 9" stroke="#999" strokeWidth="1.300" /></svg>
          </ActiveTab>
          <Plus>+</Plus>
          <Restore><RestoreIco /></Restore>
        </TabRow>
        <Content>
          <Clipped>
            钢筋工程量怎样查看呢
            <Points><Coins />10</Points>
            <Category><Mixed>[钢筋造价]</Mixed></Category>
          </Clipped>
          <List>
            {questions.map(([q, pts, cat]) => (
              <Item key={q}>
                <Ask><QMark /></Ask>
                <Question><Mixed>{q}</Mixed></Question>
                <Points><Coins />{pts}</Points>
                <Category><Mixed>{cat}</Mixed></Category>
              </Item>
            ))}
            <Item $tall>
              <Ask><QMark /></Ask>
              <Question>混凝土漏斗钢筋在抽样中用自定义线定义漏斗在哪个版本有截面编辑</Question>
              <Line2>
                <Points><Coins />25</Points>
                <Category><Mixed>[钢筋抽样GGJ2013]</Mixed></Category>
              </Line2>
            </Item>
          </List>
          <Detail>
            <Meta>
              <span>提问者：<b>翔飞之侃</b></span>
              <Pipe>|</Pipe>
              <span><Mixed>悬赏分：25分</Mixed></span>
              <Pipe>|</Pipe>
              <span><Mixed>回答次数：1次</Mixed></span>
            </Meta>
            <Body>
              混凝土漏斗钢筋在抽样中用自定义线定义漏斗在哪个版本有截面编辑<br />
              不到截面设计钢筋
            </Body>
            <AnswerBox>
              <AnswerHead>
                <svg width="13" height="11" viewBox="0 0 13 11"><rect width="13" height="11" fill="#3d8fd0" /><rect x="2" y="2" width="9" height="7" fill="#bfe0f6" /></svg>
                插入图片
              </AnswerHead>
              <AnswerInput><Mixed>回答即可得2分贡献分，回答被采纳获得系统赠送20贡献分及提问者悬赏分...</Mixed></AnswerInput>
            </AnswerBox>
          </Detail>
        </Content>
      </Browser>
      <Overlay width="1234" height="650" viewBox="0 0 1234 650">
        <path d="M1056 541L556 423" stroke="#e01018" strokeWidth="3.500" />
        <path d="M540 419L557 416L556 429z" fill="#e01018" />
      </Overlay>
    </Page>
  );
}
